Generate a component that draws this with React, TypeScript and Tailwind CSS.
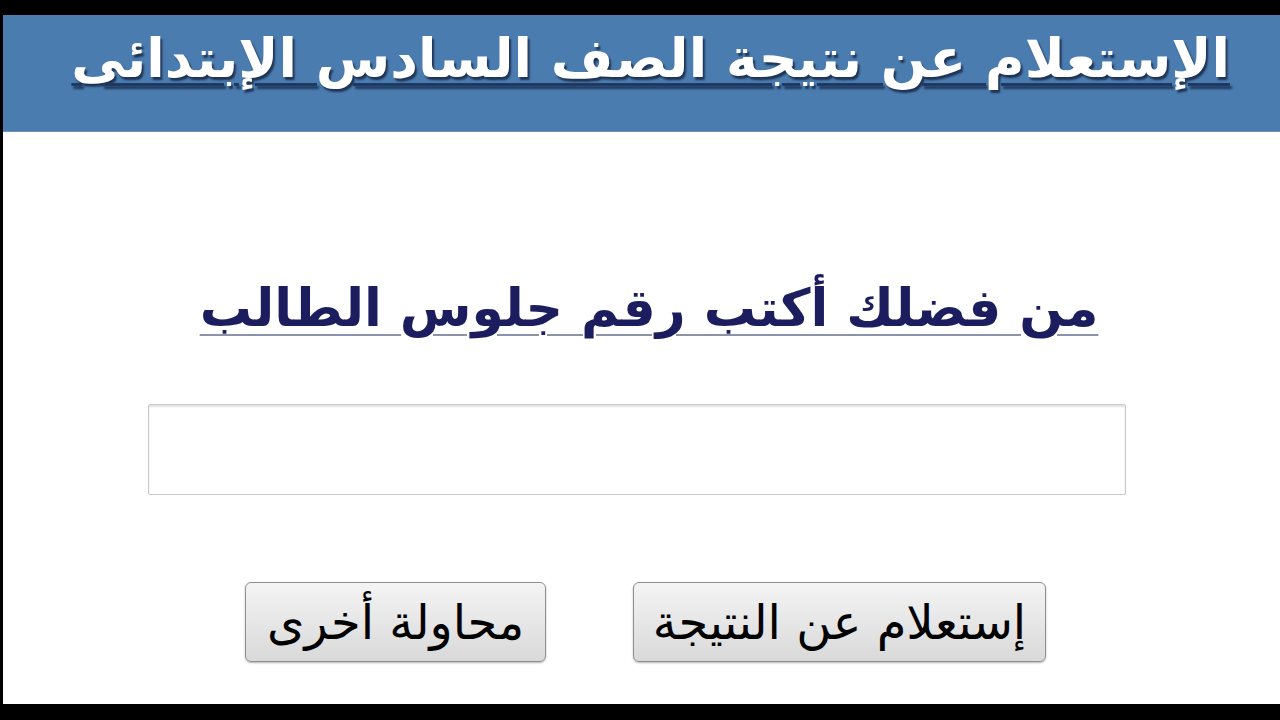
import React from 'react';

const arabic = { fontFamily: '"DejaVu Sans", sans-serif' };

const App: React.FC = () => {
  return (
    <div className="w-[1280px] h-[720px] bg-black pt-[15px] pl-[3px] pb-[16px] overflow-hidden" style={arabic}>
      <div className="h-full bg-white flex flex-col">
        <div className="h-[117px] bg-[#4a7cb0] flex items-start justify-end pt-[17px] pr-[50px] border-b border-[#6d93bd]">
          <h1
            dir="rtl"
            className="text-white font-bold text-[54px] leading-none underline decoration-[#1d3a66] decoration-[3px] underline-offset-[6px] [text-shadow:2px_3px_2px_#1f3454]"
          >
            الإستعلام عن نتيجة الصف السادس الإبتدائى
          </h1>
        </div>

        <div className="flex flex-col items-center pr-[9px]">
          <h2
            dir="rtl"
            className="mt-[150px] ml-[24px] text-[#1b1d5e] font-bold text-[52px] leading-none underline decoration-[#8b93a8] decoration-2 underline-offset-[8px]"
          >
            من فضلك أكتب رقم جلوس الطالب
          </h2>

          <input
            type="text"
            dir="rtl"
            className="mt-[70px] w-[978px] h-[91px] border border-[#c9c9c9] rounded-[2px] bg-white shadow-[inset_0_2px_2px_rgba(0,0,0,0.12)] outline-none text-[32px] px-4"
          />

          <div className="mt-[87px] flex gap-[87px] pl-[17px]">
            <button
              dir="rtl"
              className="w-[301px] h-[80px] rounded-[6px] border border-[#8f8f8f] bg-gradient-to-b from-[#f4f4f4] to-[#d9d9d9] text-black text-[48px] leading-none shadow-[0_1px_2px_rgba(0,0,0,0.3)]"
            >
              محاولة أخرى
            </button>
            <button
              dir="rtl"
              className="w-[413px] h-[80px] rounded-[6px] border border-[#8f8f8f] bg-gradient-to-b from-[#f4f4f4] to-[#d9d9d9] text-black text-[48px] leading-none shadow-[0_1px_2px_rgba(0,0,0,0.3)]"
            >
              إستعلام عن النتيجة
            </button>
          </div>
        </div>
      </div>
    </div>
  );
};

export default App;
